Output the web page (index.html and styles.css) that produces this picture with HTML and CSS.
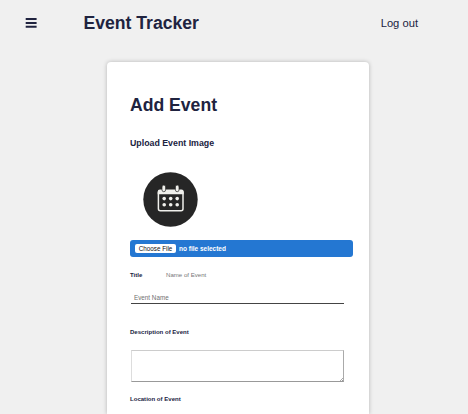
FILE: index.html
```html
<!DOCTYPE html>
<html lang="en">
<head>
<meta charset="utf-8">
<title>Event Tracker</title>
<link rel="stylesheet" href="styles.css">
</head>
<body>
<header class="header">
  <svg class="menu" viewBox="0 0 12 10" aria-label="Menu"><path d="M.7 1.1h10.9M.7 4.9h10.9M.7 8.7h10.9" stroke="currentColor" stroke-width="2"/></svg>
  <h1 class="brand">Event Tracker</h1>
  <a class="logout">Log out</a>
</header>
<main class="card">
  <h2 class="heading">Add Event</h2>
  <h3 class="subheading">Upload Event Image</h3>
  <svg class="picture" viewBox="0 0 55 55">
    <circle cx="27.5" cy="27.5" r="27.2" fill="#262626"/>
    <rect x="15.4" y="18.7" width="24.6" height="20" rx="2" fill="none" stroke="#f0f0ec" stroke-width="1.5"/>
    <path d="M14.7 22.2v-2.4q0-2.2 2.2-2.2h21.6q2.2 0 2.2 2.2v2.4z" fill="#f0f0ec"/>
    <g fill="#f0f0ec" stroke="#262626" stroke-width=".7"><rect x="19" y="13.1" width="3.6" height="6.6" rx="1.8"/><rect x="32.4" y="13.1" width="3.6" height="6.6" rx="1.8"/></g>
    <g fill="#f0f0ec"><circle cx="21.2" cy="26.6" r="1.8"/><circle cx="27.7" cy="26.6" r="1.8"/><circle cx="34.2" cy="26.6" r="1.8"/><circle cx="21.2" cy="32.7" r="1.8"/><circle cx="27.7" cy="32.7" r="1.8"/><circle cx="34.2" cy="32.7" r="1.8"/></g>
  </svg>
  <div class="file"><button class="choose">Choose File</button><span>no file selected</span></div>
  <div class="row"><label class="label" for="title">Title</label><span class="hint">Name of Event</span></div>
  <input class="input" id="title" placeholder="Event Name">
  <label class="label description" for="description">Description of Event</label>
  <textarea class="textarea" id="description"></textarea>
  <label class="label">Location of Event</label>
</main>
</body>
</html>
```
FILE: styles.css
```css
* { box-sizing: border-box; }
body {
  margin: 0;
  height: 414px;
  background: #f0f0f0;
  color: #20233f;
  font-family: "Liberation Sans", Arial, sans-serif;
}
h1, h2, h3 { margin: 0; }
.header {
  display: flex;
  align-items: center;
  height: 46px;
  padding: 0 50px 0 25px;
}
.menu { width: 12px; height: 10px; margin: 0 46.5px 1px 0; }
.brand { font-size: 17.6px; line-height: 20px; }
.logout { margin-left: auto; font-size: 11.2px; line-height: 14px; }
.card {
  width: 262px;
  height: 352px;
  margin: 16px 0 0 107px;
  padding: 33px 16px 0 23px;
  border-radius: 4px 4px 0 0;
  background: #fff;
  box-shadow: 0 0 4px rgba(0, 0, 0, .25);
}
.heading { font-size: 17.6px; line-height: 20px; }
.subheading { margin-top: 23px; font-size: 8.8px; line-height: 10px; }
.picture { display: block; width: 55px; height: 55px; margin: 24px 0 0 12.5px; }
.file {
  display: flex;
  align-items: center;
  height: 17px;
  margin-top: 13px;
  padding-left: 5px;
  border-radius: 3px;
  background: #2477d2;
  color: #fff;
  font-size: 6.5px;
  font-weight: bold;
}
.choose {
  width: 41px;
  height: 9px;
  margin-right: 3px;
  padding: 0;
  border: 0;
  border-radius: 2px;
  background: #fff;
  color: #111;
  font: 6.3px/9px "Liberation Sans", Arial, sans-serif;
}
.row { display: flex; height: 8px; margin-top: 14px; }
.label { display: block; font-size: 6.05px; font-weight: bold; line-height: 8px; }
.row .label { width: 36px; }
.hint { color: #777; font-size: 6.1px; line-height: 8px; }
.input {
  display: block;
  width: 213px;
  height: 11px;
  margin: 14px 0 0 1px;
  padding: 0 3px 1px;
  border: 0;
  border-bottom: 1px solid #444;
  background: #fff;
  font: 6.3px/8px "Liberation Sans", Arial, sans-serif;
}
.input::placeholder { color: #707070; opacity: 1; }
.description { margin-top: 24px; }
.textarea {
  display: block;
  width: 213px;
  height: 32px;
  margin: 14px 0 13px 1px;
  border: 1px solid;
  border-color: #ccc #aaa #999 #ddd;
  border-radius: 0;
  background: #fff;
  resize: none;
  background-image: linear-gradient(135deg, transparent 60%, #aaa 60% 70%, transparent 70% 82%, #999 82% 92%, transparent 92%);
  background-position: right bottom;
  background-repeat: no-repeat;
  background-size: 5px 5px;
}
```
